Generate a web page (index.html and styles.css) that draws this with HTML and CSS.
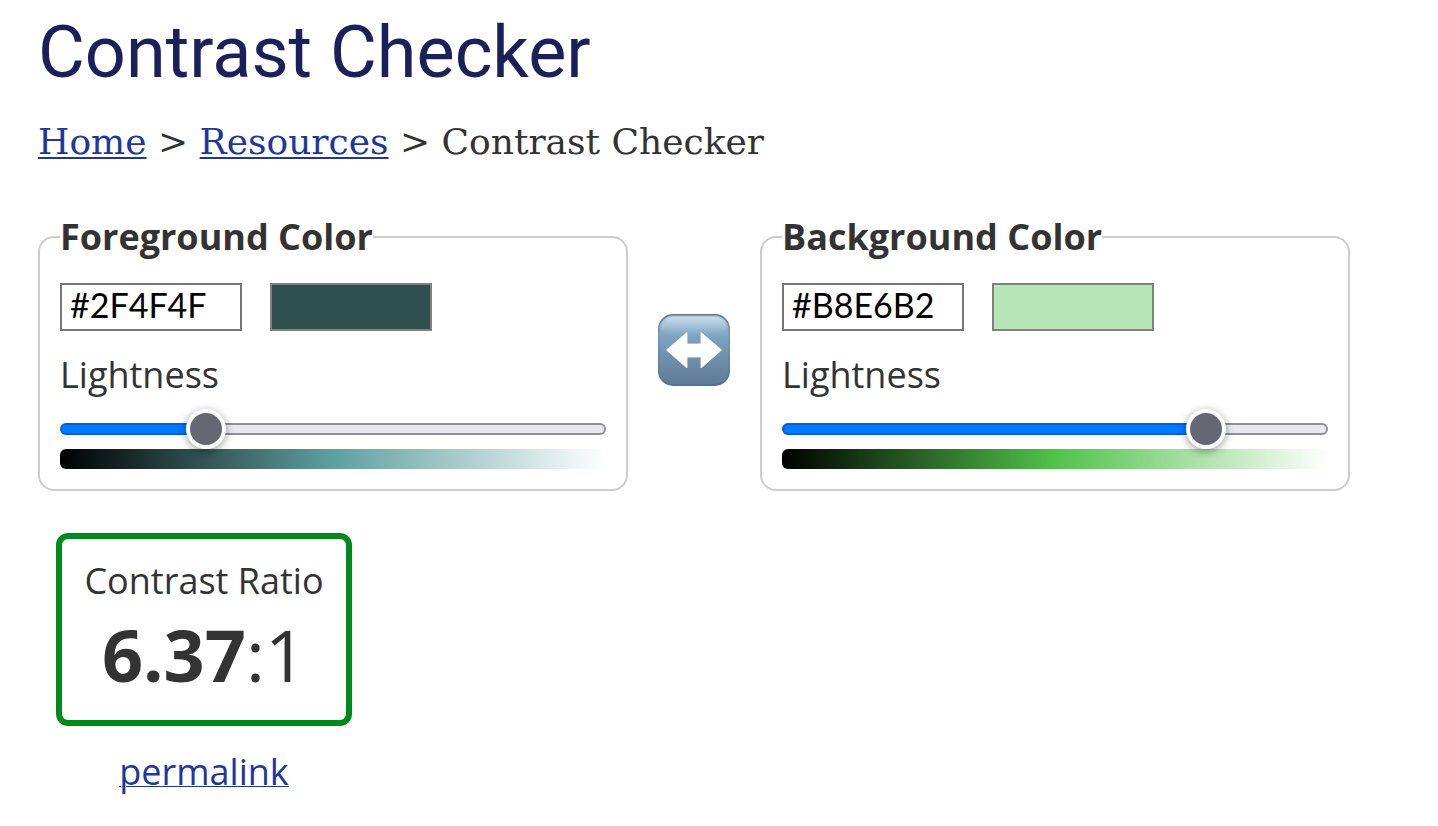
FILE: index.html
```html
<!DOCTYPE html>
<html lang="en">
<head>
<meta charset="utf-8">
<title>Contrast Checker</title>
<link rel="stylesheet" href="styles.css">
</head>
<body>
<main class="page">
  <h1 class="title">Contrast Checker</h1>
  <nav class="breadcrumb" aria-label="Breadcrumb">
    <a href="#home">Home</a> &gt; <a href="#resources">Resources</a> &gt; Contrast Checker
  </nav>
  <form class="pickers">
    <fieldset class="picker">
      <legend>Foreground Color</legend>
      <div class="values">
        <input class="hex" type="text" value="#2F4F4F" aria-label="Foreground hex value">
        <input class="swatch" type="color" value="#2f4f4f" aria-label="Foreground color picker">
      </div>
      <label class="label" for="fg-lightness">Lightness</label>
      <input class="slider" id="fg-lightness" type="range" min="0" max="100" step="any" value="24.7" style="--fill: 25%">
      <div class="ramp ramp-foreground"></div>
    </fieldset>
    <button class="swap" type="button" aria-label="Swap colors">
      <svg viewBox="0 0 72 72" width="72" height="72" aria-hidden="true">
        <defs>
          <linearGradient id="key-face" x1="0" y1="0" x2="0" y2="1">
            <stop offset="0" stop-color="#a9c6dc"/>
            <stop offset="0.12" stop-color="#9dbbd2"/>
            <stop offset="0.3" stop-color="#7fa3c3"/>
            <stop offset="0.6" stop-color="#7091ac"/>
            <stop offset="1" stop-color="#5f7c94"/>
          </linearGradient>
          <linearGradient id="key-edge" x1="0" y1="0" x2="0" y2="1">
            <stop offset="0" stop-color="#5d7a92"/>
            <stop offset="0.3" stop-color="#7195b3"/>
            <stop offset="1" stop-color="#56728a"/>
          </linearGradient>
          <linearGradient id="key-shine" x1="0" y1="0" x2="0" y2="1">
            <stop offset="0" stop-color="#d5e7f3" stop-opacity="0.7"/>
            <stop offset="1" stop-color="#9dbdd5" stop-opacity="0"/>
          </linearGradient>
        </defs>
        <rect width="72" height="72" rx="15" fill="url(#key-edge)"/>
        <rect x="1.5" y="1.5" width="69" height="68.5" rx="14" fill="url(#key-face)"/>
        <rect x="4" y="3" width="64" height="19" rx="11" fill="url(#key-shine)"/>
        <path d="M8.5 36 29 18.500V30H43V18.500L63.500 36 43 54V43H29V54Z" fill="#fff" stroke="#fff" stroke-width="0.8" stroke-linejoin="round"/>
      </svg>
    </button>
    <fieldset class="picker">
      <legend>Background Color</legend>
      <div class="values">
        <input class="hex" type="text" value="#B8E6B2" aria-label="Background hex value">
        <input class="swatch" type="color" value="#b8e6b8" aria-label="Background color picker">
      </div>
      <label class="label" for="bg-lightness">Lightness</label>
      <input class="slider" id="bg-lightness" type="range" min="0" max="100" step="any" value="80.1" style="--fill: 80%">
      <div class="ramp ramp-background"></div>
    </fieldset>
  </form>
  <section class="result">
    <div class="ratio-box">
      <h2 class="ratio-title">Contrast Ratio</h2>
      <div class="ratio"><b>6.37</b>:1</div>
    </div>
    <a class="permalink" href="#permalink">permalink</a>
  </section>
</main>
</body>
</html>
```
FILE: styles.css
```css
* {
  box-sizing: border-box;
}

body {
  margin: 0;
  background: #fff;
  color: #333;
  font: 36px/48px "Open Sans", sans-serif;
}

.page {
  padding: 11px 88px 24px 38px;
}

.title {
  margin: 0;
  color: #1b1f5a;
  font: 400 72px/84px Roboto, sans-serif;
}

.breadcrumb {
  margin: 23px 0 47px;
  font: 36px/48px "DejaVu Serif", serif;
  text-underline-offset: 3px;
}

a {
  color: #1e3799;
  text-decoration-thickness: 2px;
}

.pickers {
  display: grid;
  grid-template-columns: 1fr 132px 1fr;
  align-items: center;
}

.picker {
  min-width: 0;
  margin: 0;
  padding: 22px 20px 20px;
  border: 2px solid #ccc;
  border-radius: 16px;
}

.picker legend {
  padding: 0;
  font-weight: 700;
}

.values {
  display: flex;
  gap: 28px;
}

.hex {
  width: 182px;
  height: 48px;
  padding: 0 8px 6px;
  border: 2px solid #767676;
  background: #fff;
  color: #000;
  font: 34px/38px Lato, sans-serif;
}

.swatch {
  width: 162px;
  height: 48px;
  padding: 0;
  border: 2px solid #808080;
  background: none;
}

.swatch::-webkit-color-swatch-wrapper {
  padding: 0;
}

.swatch::-webkit-color-swatch {
  border: 0;
}

.label {
  display: block;
  padding: 20px 0 10px;
}

.slider {
  display: block;
  width: 100%;
  height: 40px;
  margin: 0;
  appearance: none;
  background: none;
}

.slider::-webkit-slider-runnable-track {
  height: 12px;
  border: 2px solid transparent;
  border-radius: 6px;
  background:
    linear-gradient(90deg, #007aff var(--fill), #e9e9ed var(--fill)) padding-box,
    linear-gradient(90deg, #0262d2 var(--fill), #8f8f9d var(--fill)) border-box;
}

.slider::-webkit-slider-thumb {
  width: 40px;
  height: 40px;
  margin-top: -16px;
  appearance: none;
  border: 4px solid #fff;
  border-radius: 50%;
  background: #676774;
  box-shadow: 0 2px 8px rgba(0, 0, 0, 0.4);
}

.ramp {
  height: 20px;
  border-radius: 6px;
}

.ramp-foreground {
  background: linear-gradient(90deg, #000, #609f9f, #fff);
}

.ramp-background {
  background: linear-gradient(90deg, #000, #52c14c, #fff);
}

.swap {
  justify-self: center;
  margin-bottom: 4px;
  padding: 0;
  border: 0;
  background: none;
}

.swap svg {
  display: block;
}

.result {
  display: flex;
  flex-direction: column;
  align-items: center;
  width: fit-content;
  margin: 42px 0 0 18px;
}

.ratio-box {
  min-width: 296px;
  padding: 18px 22px 17px;
  border: 6px solid #008a1e;
  border-radius: 12px;
  text-align: center;
}

.ratio-title {
  margin: 0;
  font-size: 36px;
  font-weight: 400;
}

.ratio {
  font-size: 72px;
  line-height: 98px;
}

.permalink {
  margin-top: 22px;
  text-decoration-thickness: 1px;
}
```
